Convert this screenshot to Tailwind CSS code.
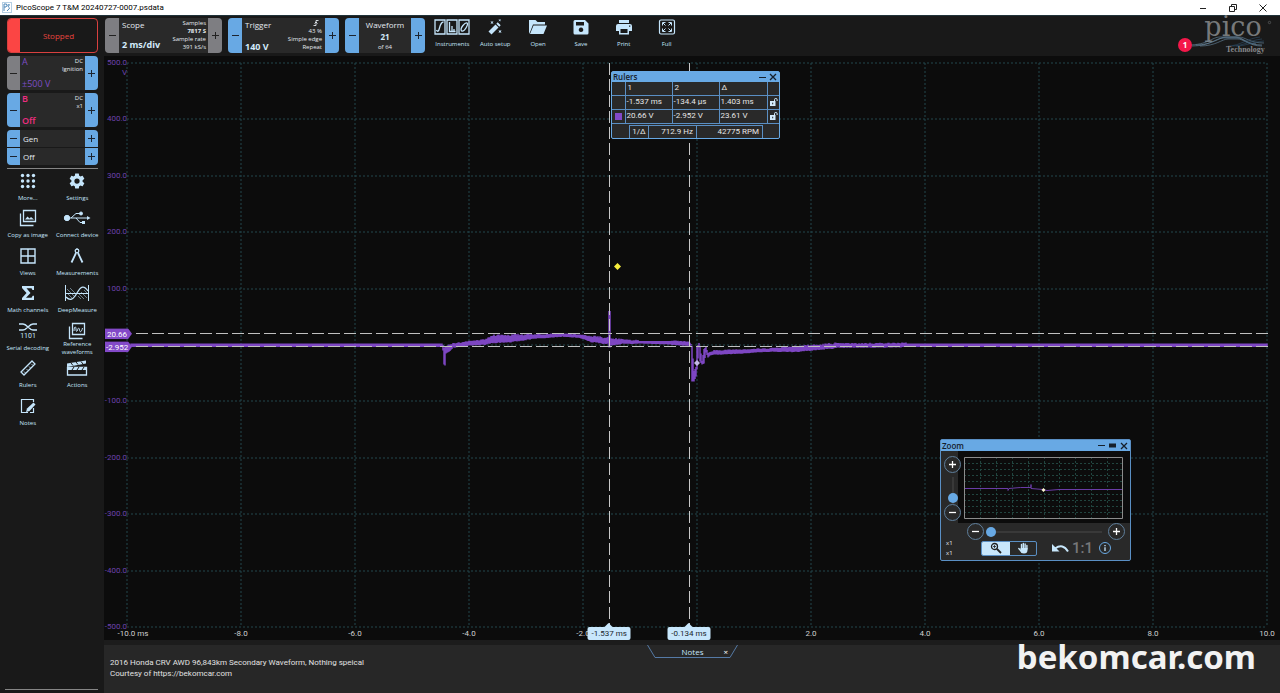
<!DOCTYPE html>
<html lang="en">
<head>
  <meta charset="UTF-8" />
  <meta name="viewport" content="width=device-width, initial-scale=1.0"/>
  <title>PicoScope 7 T&amp;M</title>
  <script src="https://cdn.jsdelivr.net/npm/@tailwindcss/browser@4"></script>
</head>
<body class="h-screen flex flex-col overflow-hidden bg-[#191919] text-[#e4eaf0] font-['Open_Sans',sans-serif]">

  <!-- title bar -->
  <header class="h-[15px] shrink-0 flex items-center bg-white text-black pl-0.5">
    <svg class="w-[10px] h-[11px]" viewBox="0 0 10 11" fill="none" stroke="#4c86b8"><rect x=".5" y=".5" width="9" height="10" stroke="#b5cfe4"/><path d="M2 9V2h2.500q1 1.500-.5 3H2M8 3q-3-1-2 1t1.500 2T5 9"/></svg>
    <h1 class="text-[8px] leading-[14px] ml-1 grow font-[Roboto,sans-serif]">PicoScope 7 T&amp;M 20240727-0007.psdata</h1>
    <button class="w-[30px] h-full grid place-items-center" aria-label="Minimize"><svg class="w-2 h-2" viewBox="0 0 8 8" stroke="#222"><path d="M1 4.500h6"/></svg></button>
    <button class="w-[30px] h-full grid place-items-center" aria-label="Restore"><svg class="w-2 h-2" viewBox="0 0 8 8" fill="none" stroke="#222"><path d="M.5 2.500h5v5h-5zM2.500 2V.5h5v5H6"/></svg></button>
    <button class="w-[30px] h-full grid place-items-center mr-0.5" aria-label="Close"><svg class="w-2 h-2" viewBox="0 0 8 8" stroke="#222"><path d="M.5.5l7 7M7.500.5l-7 7"/></svg></button>
  </header>

  <div class="grow flex min-h-0 border-t border-[#20333a]">

    <!-- left column -->
    <aside class="w-[104px] shrink-0 flex flex-col pl-[7px] pr-[6px] pt-0.5">
      <button class="h-[35px] flex rounded border border-[#d8403f] overflow-hidden text-[#e8453f] text-[8px]">
        <span class="w-3 h-full bg-[#fb4544]"></span>
        <span class="grow self-center">Stopped</span>
      </button>

      <section class="mt-[3px] h-[34px] flex rounded overflow-hidden bg-[#292929]">
        <button class="w-[13px] bg-[#7e7e82] text-[#222] grid place-items-center" aria-label="Channel A range down"><svg class="w-[7px] h-[7px]" viewBox="0 0 7 7" stroke="currentColor"><path d="M0 3.500h7"/></svg></button>
        <div class="grow flex justify-between px-0.5">
          <div class="flex flex-col justify-between text-[#7d4dc4] text-[9px] leading-[12px]"><span>A</span><span>±500 V</span></div>
          <div class="-ml-4 pt-px text-right text-[6px] leading-[8px]">DC<br>Ignition</div>
        </div>
        <button class="w-[13px] bg-[#68a9e4] text-[#1c2430] grid place-items-center" aria-label="Channel A range up"><svg class="w-[7px] h-[7px]" viewBox="0 0 7 7" stroke="currentColor"><path d="M0 3.500h7M3.500 0v7"/></svg></button>
      </section>

      <section class="mt-[3px] h-[34px] flex rounded overflow-hidden bg-[#292929]">
        <button class="w-[13px] bg-[#68a9e4] text-[#1c2430] grid place-items-center" aria-label="Channel B range down"><svg class="w-[7px] h-[7px]" viewBox="0 0 7 7" stroke="currentColor"><path d="M0 3.500h7"/></svg></button>
        <div class="grow flex justify-between px-0.5">
          <div class="flex flex-col justify-between text-[#ee2d80] text-[9px] leading-[12px] font-semibold"><span>B</span><span>Off</span></div>
          <div class="pt-px text-right text-[6px] leading-[8px]">DC<br>x1</div>
        </div>
        <button class="w-[13px] bg-[#68a9e4] text-[#1c2430] grid place-items-center" aria-label="Channel B range up"><svg class="w-[7px] h-[7px]" viewBox="0 0 7 7" stroke="currentColor"><path d="M0 3.500h7M3.500 0v7"/></svg></button>
      </section>

      <section class="mt-[3px] h-[35px] grid grid-rows-2 gap-px rounded overflow-hidden text-[8px]">
        <div class="flex bg-[#292929]">
          <button class="w-[13px] bg-[#68a9e4] text-[#1c2430] grid place-items-center" aria-label="Generator down"><svg class="w-[7px] h-[7px]" viewBox="0 0 7 7" stroke="currentColor"><path d="M0 3.500h7"/></svg></button>
          <span class="grow self-center pl-[3px]">Gen</span>
          <button class="w-[13px] bg-[#68a9e4] text-[#1c2430] grid place-items-center" aria-label="Generator up"><svg class="w-[7px] h-[7px]" viewBox="0 0 7 7" stroke="currentColor"><path d="M0 3.500h7M3.500 0v7"/></svg></button>
        </div>
        <div class="flex bg-[#292929]">
          <button class="w-[13px] bg-[#68a9e4] text-[#1c2430] grid place-items-center" aria-label="Generator off"><svg class="w-[7px] h-[7px]" viewBox="0 0 7 7" stroke="currentColor"><path d="M0 3.500h7"/></svg></button>
          <span class="grow self-center pl-[3px]">Off</span>
          <button class="w-[13px] bg-[#68a9e4] text-[#1c2430] grid place-items-center" aria-label="Generator on"><svg class="w-[7px] h-[7px]" viewBox="0 0 7 7" stroke="currentColor"><path d="M0 3.500h7M3.500 0v7"/></svg></button>
        </div>
      </section>

      <hr class="mt-[3px] border-[#858585]">

      <nav class="-mx-1 mt-[3px] h-[262px] grid grid-cols-2 grid-rows-7 text-[6px] leading-[8px] text-[#c5e5fb] text-center whitespace-nowrap">
        <button class="flex flex-col items-center gap-1">
          <svg class="w-[18px] h-[18px]" viewBox="0 0 18 18" fill="currentColor"><g id="dots"><circle cx="3.500" cy="3.500" r="1.700"/><circle cx="9" cy="3.500" r="1.700"/><circle cx="14.500" cy="3.500" r="1.700"/></g><use href="#dots" y="5.500"/><use href="#dots" y="11"/></svg>
          More...
        </button>
        <button class="flex flex-col items-center gap-1">
          <svg class="w-[18px] h-[18px]" viewBox="0 0 24 24" fill="currentColor"><path d="M19.430 12.980c.04-.32.07-.64.07-.98s-.03-.66-.07-.98l2.110-1.650c.19-.15.24-.42.12-.64l-2-3.460c-.12-.22-.39-.3-.61-.22l-2.490 1c-.52-.4-1.080-.73-1.690-.98l-.38-2.650A.49.49 0 0 0 14 2h-4c-.25 0-.46.18-.49.42l-.38 2.650c-.61.25-1.170.59-1.690.98l-2.490-1c-.23-.09-.49 0-.61.22l-2 3.460c-.13.22-.07.49.12.64l2.110 1.650c-.04.32-.07.65-.07.98s.03.66.07.98l-2.110 1.650c-.19.15-.24.42-.12.64l2 3.460c.12.22.39.3.61.22l2.490-1c.52.4 1.080.73 1.690.98l.38 2.650c.03.24.24.42.49.42h4c.25 0 .46-.18.49-.42l.38-2.650c.61-.25 1.170-.59 1.690-.98l2.490 1c.23.09.49 0 .61-.22l2-3.460c.12-.22.07-.49-.12-.64l-2.110-1.650zM12 15.500a3.500 3.500 0 1 1 0-7 3.500 3.500 0 0 1 0 7z"/></svg>
          Settings
        </button>
        <button class="flex flex-col items-center gap-1">
          <svg class="w-[18px] h-[18px]" viewBox="0 0 18 18" fill="none" stroke="currentColor" stroke-width="1.300"><path d="M4.500 1.500h12v11h-12zM1.500 4.500v12h13"/><path d="M6 10.500l2.500-3 2 2 1.500-1.500 3 2.500z" fill="currentColor" stroke="none"/></svg>
          Copy as image
        </button>
        <button class="flex flex-col items-center gap-1">
          <svg class="w-[28px] h-[18px]" viewBox="0 0 28 18" fill="none" stroke="currentColor"><circle cx="4" cy="9" r="2.700" fill="currentColor"/><path d="M4 9h20M8 9l5-4.500h4M13 9l4 4.500h3"/><path d="M24 7l3.500 2-3.500 2z" fill="currentColor" stroke="none"/><circle cx="18" cy="4.500" r="1.500" fill="currentColor"/><path d="M19 12h3v3h-3z" fill="currentColor" stroke="none"/></svg>
          Connect device
        </button>
        <button class="flex flex-col items-center gap-1">
          <svg class="w-[18px] h-[18px]" viewBox="0 0 18 18" fill="none" stroke="currentColor" stroke-width="1.400"><path d="M2 2h14v14H2zM9 2v14M2 9h14"/></svg>
          Views
        </button>
        <button class="flex flex-col items-center gap-1">
          <svg class="w-[18px] h-[18px]" viewBox="0 0 18 18" fill="none" stroke="currentColor" stroke-width="1.800"><circle cx="9" cy="4" r="1.800" stroke-width="1.300"/><path d="M9 1v2" stroke-width="1"/><path d="M8 6L3.500 15.500M10 6l4.500 9.500"/></svg>
          Measurements
        </button>
        <button class="flex flex-col items-center gap-1">
          <svg class="w-[18px] h-[18px]" viewBox="0 0 18 18" fill="currentColor"><path d="M3 2h12v4h-1.500L12.500 4.300H7.500L11.500 9l-4.500 4.700h5.500l1.200-2H15V16H3v-2l4.500-5L3 4z"/></svg>
          Math channels
        </button>
        <button class="flex flex-col items-center gap-1">
          <svg class="w-[26px] h-[18px]" viewBox="0 0 26 18" fill="none" stroke="currentColor"><path d="M1.500 1v16M24.500 1v16M1.500 9.500h23"/><path d="M2 13C6 17 9 16 13 9S20 1 24 7" stroke-width="1.300"/><path d="M3 5l7 7M6 4l6 6M3 9l5 5M14 9l6 6M17 8l6 6M14 12l3 3M20 6l4 4" stroke-width=".5"/></svg>
          DeepMeasure
        </button>
        <button class="flex flex-col items-center gap-1">
          <svg class="w-[20px] h-[18px]" viewBox="0 0 20 18"><path d="M1 2h4c4 0 6 6 10 6h4M1 8h4c4 0 6-6 10-6h4" fill="none" stroke="currentColor" stroke-width="1.400"/><text x="10" y="16" text-anchor="middle" font-family="Roboto" font-size="7" fill="currentColor">1101</text></svg>
          Serial decoding
        </button>
        <button class="flex flex-col items-center">
          <svg class="w-[18px] h-[18px]" viewBox="0 0 18 18" fill="none" stroke="currentColor" stroke-width="1.300"><path d="M4.500 1.500h12v11h-12zM1.500 4.500v12h13"/><path d="M6 9c0-5 2-5 2-2s1 3 1.500 1 1.500-3 2 0 2 2 3-2" stroke-width="1"/></svg>
          <span>Reference<br>waveforms</span>
        </button>
        <button class="flex flex-col items-center gap-1">
          <svg class="w-[18px] h-[18px]" viewBox="0 0 18 18" fill="none" stroke="currentColor" stroke-width="1.300"><path d="M2 13L13 2l3 3L5 16z"/><path d="M5 12.500l1.500 1.500M7.500 10l1.500 1.500M10 7.500L11.500 9M12.500 5L14 6.500" stroke-width=".8"/></svg>
          Rulers
        </button>
        <button class="flex flex-col items-center gap-1">
          <svg class="w-[22px] h-[18px]" viewBox="0 0 22 18" fill="none" stroke="currentColor"><path d="M1.500 8.500h19v7.500h-19z" stroke-width="1.300"/><path d="M1 4.500L20 1.500v3L1 8zM1 8h20v3H1z" fill="currentColor" stroke="none"/><path d="M5 4l2 2.500M10 3l2 2.500M15 2.500L17 5M6 11l2-3M11 11l2-3M16 11l2-3" stroke="#191919"/></svg>
          Actions
        </button>
        <button class="flex flex-col items-center gap-1">
          <svg class="w-[18px] h-[18px]" viewBox="0 0 18 18" fill="none" stroke="currentColor" stroke-width="1.200"><path d="M14.500 5V2.500h-12v13H9M14.500 11v4.500H11"/><path d="M7 15l1-3.500 6.500-6 2 2L10.500 14z" fill="currentColor" stroke="none"/></svg>
          Notes
        </button>
      </nav>

      <hr class="mt-auto mb-[3px] -ml-0.5 border-[#858585]">
    </aside>

    <main class="grow flex flex-col min-w-0">

      <!-- toolbar -->
      <div class="h-10 shrink-0 flex pt-0.5 pl-px">
        <section class="w-[117px] h-[35px] flex rounded overflow-hidden bg-[#292929]">
          <button class="w-[14px] bg-[#7e7e82] text-[#222] grid place-items-center" aria-label="Timebase down"><svg class="w-[7px] h-[7px]" viewBox="0 0 7 7" stroke="currentColor"><path d="M0 3.500h7"/></svg></button>
          <div class="grow flex justify-between pl-[3px] pr-0.5 whitespace-nowrap">
            <div class="flex flex-col justify-between text-[8px] leading-[13px] pb-0.5"><span>Scope</span><b class="text-[9px] text-[#d3ebfb]">2 ms/div</b></div>
            <div class="-ml-4 pt-px text-right text-[6px] leading-[8px]">Samples<br><b>7817 S</b><br>Sample rate<br>391 kS/s</div>
          </div>
          <button class="w-[14px] bg-[#7e7e82] text-[#222] grid place-items-center" aria-label="Timebase up"><svg class="w-[7px] h-[7px]" viewBox="0 0 7 7" stroke="currentColor"><path d="M0 3.500h7M3.500 0v7"/></svg></button>
        </section>

        <section class="ml-[6px] w-[111px] h-[35px] flex rounded overflow-hidden bg-[#292929]">
          <button class="w-[14px] bg-[#68a9e4] text-[#1c2430] grid place-items-center" aria-label="Trigger level down"><svg class="w-[7px] h-[7px]" viewBox="0 0 7 7" stroke="currentColor"><path d="M0 3.500h7"/></svg></button>
          <div class="grow flex justify-between pl-[3px] pr-[3px] whitespace-nowrap">
            <div class="flex flex-col justify-between text-[8px] leading-[13px]"><span>Trigger</span><b class="text-[9px] text-[#d3ebfb]">140 V</b></div>
            <div class="pt-px text-right text-[6px] leading-[8px]"><svg class="w-[6px] h-[8px] ml-auto mr-[3px]" viewBox="0 0 6 8" fill="none" stroke="currentColor"><path d="M.5 6.500H3v-5h2.500M1.500 4.500L3 3l1.500 1.500" stroke-width=".9"/></svg>43 %<br>Simple edge<br>Repeat</div>
          </div>
          <button class="w-[14px] bg-[#68a9e4] text-[#1c2430] grid place-items-center" aria-label="Trigger level up"><svg class="w-[7px] h-[7px]" viewBox="0 0 7 7" stroke="currentColor"><path d="M0 3.500h7M3.500 0v7"/></svg></button>
        </section>

        <section class="ml-[6px] w-20 h-[35px] flex rounded overflow-hidden bg-[#292929]">
          <button class="w-[14px] bg-[#68a9e4] text-[#1c2430] grid place-items-center" aria-label="Previous waveform"><svg class="w-[7px] h-[7px]" viewBox="0 0 7 7" stroke="currentColor"><path d="M0 3.500h7"/></svg></button>
          <div class="grow text-center text-[8px] leading-[12px] pt-px">Waveform<br><b class="text-[#d3ebfb]">21</b><div class="text-[6px] leading-[9px]">of 64</div></div>
          <button class="w-[14px] bg-[#68a9e4] text-[#1c2430] grid place-items-center" aria-label="Next waveform"><svg class="w-[7px] h-[7px]" viewBox="0 0 7 7" stroke="currentColor"><path d="M0 3.500h7M3.500 0v7"/></svg></button>
        </section>

        <div class="ml-[6px] w-[257px] grid grid-cols-6 text-[6px] leading-[8px] text-[#c5e5fb] whitespace-nowrap">
          <button class="flex flex-col items-center gap-1">
            <svg class="w-[36px] h-[18px]" viewBox="0 0 36 18" fill="none" stroke="currentColor" stroke-width="1.300"><path d="M1 2h10v14H1zM13 2h10v14H13zM25 2h10v14H25z"/><path d="M2.500 12c1 2 2 2 3-2s2-6 4-6M15.500 4v9.500h6M18 13V8M20 13v-2"/><path d="M27.500 13c-2-3 4-9 5.500-8s-2 9-5.500 8z"/></svg>
            Instruments
          </button>
          <button class="flex flex-col items-center gap-1">
            <svg class="w-[18px] h-[18px]" viewBox="0 0 18 18" fill="currentColor"><path d="M2.500 13.500l7-7 3 3-7 7z"/><path d="M10.300 5.700l1.400-1.400 3 3-1.400 1.400zM4.500 3l1.500.8L7.500 3l-.8 1.500L7.500 6 6 5.200 4.500 6l.8-1.500zM12.500 1l1.300.7L15 1l-.7 1.300.7 1.200-1.200-.7-1.300.7.7-1.200zM12.500 12l1.500.7 1.500-.7-.7 1.500.7 1.500-1.500-.7-1.500.7.7-1.500z"/></svg>
            Auto setup
          </button>
          <button class="flex flex-col items-center gap-1">
            <svg class="w-[20px] h-[18px]" viewBox="0 0 20 18" fill="currentColor"><path d="M1 2h6.500l2 2H17v2.500H5L2.500 13 1 16zM5.500 7.500H19L15.500 16H2z"/></svg>
            Open
          </button>
          <button class="flex flex-col items-center gap-1">
            <svg class="w-[18px] h-[18px]" viewBox="0 0 18 18" fill="currentColor" fill-rule="evenodd"><path d="M3 2h10l3.500 3.500V15q0 1.500-1.500 1.500H3Q1.500 16.500 1.500 15V3.500Q1.500 2 3 2zM4 4v3.500h8V4zM9 9.500a2.300 2.300 0 1 0 .01 0z"/></svg>
            Save
          </button>
          <button class="flex flex-col items-center gap-1">
            <svg class="w-[18px] h-[18px]" viewBox="0 0 18 18" fill="currentColor" fill-rule="evenodd"><path d="M4 2h10v3H4zM3 6h12q2 0 2 2v5h-3v3.500H4V13H1V8q0-2 2-2zM5.500 11v4h7v-4zM14 7.500v1.300h1.300V7.500z"/></svg>
            Print
          </button>
          <button class="flex flex-col items-center gap-1">
            <svg class="w-[18px] h-[18px]" viewBox="0 0 18 18" fill="none" stroke="currentColor"><rect x="1.500" y="2" width="15" height="14" rx="1.500" stroke-width="1.200"/><path d="M4.500 7.500v-3h3M10.500 4.500h3v3M13.500 10.500v3h-3M7.500 13.500h-3v-3M5 5l2.500 2.500M13 5l-2.500 2.500M13 13l-2.500-2.500M5 13l2.500-2.500"/></svg>
            Full
          </button>
        </div>

        <!-- brand -->
        <div class="ml-auto mr-2 flex items-start">
          <span class="relative z-10 mt-5 -mr-1 size-[14px] rounded-full bg-[#f4184a] text-white text-[8px] leading-[14px] text-center font-bold">1</span>
          <svg class="w-[84px] h-[38px] overflow-visible" viewBox="0 0 84 38" role="img" aria-label="pico Technology">
            <text x="45" y="18" text-anchor="middle" font-family="DejaVu Serif" font-size="27" fill="#77797b">pico</text>
            <circle cx="81.500" cy="4.500" r="1.200" fill="none" stroke="#77797b" stroke-width=".5"/>
            <g fill="none" stroke="#6d8ea8" stroke-width=".6"><path d="M0 27C20 27 24 19 32 19h16C54 19 60 27 74 27M4 28C22 28 28 20 35 20h14C56 20 60 28 74 28M8 27C24 27 32 19 38 19h13C57 19 62 25 76 25M12 28C28 28 34 21 40 21h10C55 21 58 26 68 26"/><path d="M40 28C52 28 60 20 72 19M44 28C56 28 62 22 74 21M48 28C58 28 64 24 76 23" stroke="#2d4f6b"/></g>
            <text x="38" y="34" font-family="Liberation Serif" font-size="8" font-weight="bold" fill="#85878a">Technology</text>
          </svg>
        </div>
      </div>

      <!-- scope view -->
      <section class="grow relative min-h-0 bg-[#0c0c0c] grid grid-cols-[23px_1fr_13px] grid-rows-[7px_1fr_13px] font-[Roboto,sans-serif] text-[8px] leading-[10px]">
        <div class="col-start-1 row-start-2 flex flex-col justify-between text-right text-[#6d42ac]">
          <div class="h-0"><div class="-mt-[5px]">500.0<br>V</div></div>
          <div class="h-0"><div class="-mt-[5px]">400.0</div></div>
          <div class="h-0"><div class="-mt-[5px]">300.0</div></div>
          <div class="h-0"><div class="-mt-[5px]">200.0</div></div>
          <div class="h-0"><div class="-mt-[5px]">100.0</div></div>
          <div class="h-0"></div>
          <div class="h-0"><div class="-mt-[5px]">-100.0</div></div>
          <div class="h-0"><div class="-mt-[5px]">-200.0</div></div>
          <div class="h-0"><div class="-mt-[5px]">-300.0</div></div>
          <div class="h-0"><div class="-mt-[5px]">-400.0</div></div>
          <div class="h-0"><div class="-mt-[5px]">-500.0</div></div>
        </div>

        <div class="col-start-2 row-start-2 relative min-h-0">
          <svg class="absolute inset-0 w-full h-full overflow-visible" viewBox="0 0 1140 564" preserveAspectRatio="none" fill="none">
            <path id="grid" stroke="#22464c" stroke-dasharray="2 2" vector-effect="non-scaling-stroke"/>
            <path id="wave" stroke="#7d46c2" stroke-width="1.500" vector-effect="non-scaling-stroke"/>
            <path d="M9 270.500h1132M9 283.500h1132" stroke="#c0c0c0" stroke-dasharray="12 4" vector-effect="non-scaling-stroke"/>
            <path d="M482.500 0v564M562.500 0v564" stroke="#c8c8c8" stroke-dasharray="12 4" vector-effect="non-scaling-stroke"/>
            <path d="M490.500 200l3.500 3.500-3.500 3.500-3.500-3.500z" fill="#f7ee3c"/>
            <path d="M570 297l3 3-3 3-3-3z" fill="#c3b8e6"/>
          </svg>

          <!-- ruler handles -->
          <span class="absolute top-[48%] -left-[22px] -translate-y-1/2 w-[27px] h-[11px] pl-0.5 leading-[11px] bg-[#8349c8] text-white [clip-path:polygon(0_0,85%_0,100%_50%,85%_100%,0_100%)]">20.66</span>
          <span class="absolute top-[50.300%] -left-[22px] -translate-y-1/2 w-[27px] h-[11px] pl-px leading-[11px] bg-[#8349c8] text-white [clip-path:polygon(0_0,85%_0,100%_50%,85%_100%,0_100%)]">-2.952</span>
          <span class="absolute z-10 top-full left-[42.300%] -translate-x-1/2 w-[43px] h-[13px] rounded-xs bg-[#c8e7fc] text-[#20262c] leading-[13px] text-center before:absolute before:-top-1 before:left-[17px] before:border-x-4 before:border-b-4 before:border-x-transparent before:border-b-[#c8e7fc]">-1.537 ms</span>
          <span class="absolute z-10 top-full left-[49.300%] -translate-x-1/2 w-[43px] h-[13px] rounded-xs bg-[#c8e7fc] text-[#20262c] leading-[13px] text-center before:absolute before:-top-1 before:left-[17px] before:border-x-4 before:border-b-4 before:border-x-transparent before:border-b-[#c8e7fc]">-0.134 ms</span>
        </div>

        <div class="col-start-2 row-start-3 flex justify-between pt-0.5 text-[#d0d0d0] whitespace-nowrap">
          <span class="w-0 flex justify-center"><span class="pl-3">-10.0 ms</span></span>
          <span class="w-0 flex justify-center">-8.0</span>
          <span class="w-0 flex justify-center">-6.0</span>
          <span class="w-0 flex justify-center">-4.0</span>
          <span class="w-0 flex justify-center">-2.0</span>
          <span class="w-0"></span>
          <span class="w-0 flex justify-center">2.0</span>
          <span class="w-0 flex justify-center">4.0</span>
          <span class="w-0 flex justify-center">6.0</span>
          <span class="w-0 flex justify-center">8.0</span>
          <span class="w-0 flex justify-center">10.0</span>
        </div>

        <!-- rulers window -->
        <div class="absolute left-[507px] top-[15px] w-[169px] rounded-xs border border-[#68a9e4] bg-[#292929] text-[#e6e6e6] text-[8px]">
          <div class="h-[10px] flex items-center bg-[#68a9e4] text-[#16202b] pl-px">
            <h2 class="grow leading-[10px] font-semibold font-['Open_Sans',sans-serif]">Rulers</h2>
            <button class="w-[10px]" aria-label="Minimize rulers"><svg class="w-[7px] h-[7px]" viewBox="0 0 7 7" stroke="currentColor"><path d="M0 3.500h7"/></svg></button>
            <button class="w-[10px]" aria-label="Close rulers"><svg class="w-[8px] h-[8px]" viewBox="0 0 8 8" stroke="currentColor" stroke-width="1.300"><path d="M1 1l6 6M7 1L1 7"/></svg></button>
          </div>
          <table class="w-full table-fixed border-collapse text-left leading-[12px]">
            <colgroup><col class="w-[13px]"><col class="w-[47px]"><col class="w-[47px]"><col class="w-[48px]"><col class="w-[12px]"></colgroup>
            <tr class="h-[13px] border-b border-[#5a8fc4]"><td></td><th class="border-l border-[#5a8fc4] p-0 pl-0.5 font-normal">1</th><th class="border-l border-[#5a8fc4] p-0 pl-0.5 font-normal">2</th><th class="border-l border-[#5a8fc4] p-0 pl-0.5 font-normal">Δ</th><td class="border-l border-[#5a8fc4]"></td></tr>
            <tr class="h-[14px] border-b border-[#5a8fc4]"><td></td><td class="border-l border-[#5a8fc4] pl-px">-1.537 ms</td><td class="border-l border-[#5a8fc4] pl-px">-134.4 µs</td><td class="border-l border-[#5a8fc4] pl-px">1.403 ms</td><td class="border-l border-[#5a8fc4] pl-0.5"><svg class="w-2 h-2" viewBox="0 0 8 8" fill="none" stroke="#d5ecfc"><path d="M0 3h5.500v5H0z" fill="#d5ecfc" stroke="none"/><path d="M4.500 3V1.500q0-1 1.300-1t1.300 1V3"/><path d="M2.700 4.700v1.600" stroke="#292929"/></svg></td></tr>
            <tr class="h-[14px] border-b border-[#5a8fc4]"><td class="pl-[3px]"><div class="size-[7px] bg-[#8349c8]"></div></td><td class="border-l border-[#5a8fc4] pl-px">20.66 V</td><td class="border-l border-[#5a8fc4] pl-px">-2.952 V</td><td class="border-l border-[#5a8fc4] pl-px">23.61 V</td><td class="border-l border-[#5a8fc4] pl-0.5"><svg class="w-2 h-2" viewBox="0 0 8 8" fill="none" stroke="#d5ecfc"><path d="M0 3h5.500v5H0z" fill="#d5ecfc" stroke="none"/><path d="M4.500 3V1.500q0-1 1.300-1t1.300 1V3"/><path d="M2.700 4.700v1.600" stroke="#292929"/></svg></td></tr>
          </table>
          <table class="mt-px ml-[17px] w-[134px] table-fixed border-collapse border-x border-t border-[#5a8fc4] leading-[12px]">
            <tr class="h-[13px]"><td class="w-[19px] text-center">1/Δ</td><td class="w-[48px] border-l border-[#5a8fc4] pr-[3px] text-right">712.9 Hz</td><td class="border-l border-[#5a8fc4] pr-[3px] text-right">42775 RPM</td></tr>
          </table>
        </div>

        <!-- zoom window -->
        <div class="absolute right-[149px] bottom-[79px] w-[191px] rounded-xs border border-[#5a8fc4] bg-[#292929] font-['Open_Sans',sans-serif]">
          <div class="h-[11px] flex items-center bg-[#68a9e4] text-[#16202b] pl-px">
            <h2 class="grow leading-[10px] font-semibold">Zoom</h2>
            <button class="w-[11px]" aria-label="Minimize zoom"><svg class="w-[7px] h-[7px]" viewBox="0 0 7 7" stroke="currentColor"><path d="M0 3.500h7"/></svg></button>
            <button class="w-[11px]" aria-label="Dock zoom"><svg class="w-[7px] h-[7px]" viewBox="0 0 7 7" fill="currentColor"><path d="M0 1.500h7v4H0z"/></svg></button>
            <button class="w-[10px]" aria-label="Close zoom"><svg class="w-[8px] h-[8px]" viewBox="0 0 8 8" stroke="currentColor" stroke-width="1.300"><path d="M1 1l6 6M7 1L1 7"/></svg></button>
          </div>
          <div class="flex h-[72px]">
            <div class="w-[17px] pl-[3px] pt-[5px] flex flex-col items-start">
              <button class="relative z-10 size-[17px] shrink-0 rounded-full border border-[#5f7f9c] bg-[#292929] grid place-items-center" aria-label="Zoom in vertically"><svg class="w-[7px] h-[7px]" viewBox="0 0 7 7" stroke="#fff" stroke-width="1.300"><path d="M0 3.500h7M3.500 0v7"/></svg></button>
              <input type="range" value="5" aria-label="Vertical zoom" class="ml-1 mt-1 w-[10px] h-[27px] appearance-none [writing-mode:vertical-lr] [direction:rtl] [background:linear-gradient(#393939,#393939)_center/2px_100%_no-repeat] [&::-webkit-slider-thumb]:appearance-none [&::-webkit-slider-thumb]:size-[10px] [&::-webkit-slider-thumb]:rounded-full [&::-webkit-slider-thumb]:bg-[#68a9e4]">
              <button class="relative z-10 size-[17px] shrink-0 rounded-full border border-[#5f7f9c] bg-[#292929] grid place-items-center" aria-label="Zoom out vertically"><svg class="w-[7px] h-[7px]" viewBox="0 0 7 7" stroke="#fff" stroke-width="1.300"><path d="M0 3.500h7"/></svg></button>
            </div>
            <div class="grow bg-[#0c0c0c] pl-[6px] pr-[7px] pt-[6px] pb-1">
              <svg class="w-full h-full" viewBox="0 0 159 62" preserveAspectRatio="none" fill="none">
                <path d="M16.500 0v62M32.500 0v62M48.500 0v62M64.500 0v62M80.500 0v62M95.500 0v62M111.500 0v62M127.500 0v62M143.500 0v62M0 6.500h159M0 12.500h159M0 18.500h159M0 24.500h159M0 37.500h159M0 43.500h159M0 49.500h159M0 55.500h159" stroke="#21453f" stroke-dasharray="2 2"/>
                <path d="M0 31.500h44v2l1-2q12-1.500 22-1v-3 4l12 1 4 1 12-1h64" stroke="#6a3ca6"/>
                <path d="M.5.5h158v61H.5z" stroke="#8c8c8c"/>
                <path d="M79.500 31l2 2-2 2-2-2z" fill="#fdf8d0"/>
              </svg>
            </div>
          </div>
          <div class="flex items-center h-[17px] pl-[26px] pr-[5px]">
            <button class="size-[17px] shrink-0 rounded-full border border-[#5f7f9c] bg-[#292929] grid place-items-center" aria-label="Zoom out horizontally"><svg class="w-[7px] h-[7px]" viewBox="0 0 7 7" stroke="#fff" stroke-width="1.300"><path d="M0 3.500h7"/></svg></button>
            <input type="range" value="0" aria-label="Horizontal zoom" class="mx-0.5 min-w-0 grow h-[10px] appearance-none [background:linear-gradient(#393939,#393939)_center/100%_2px_no-repeat] [&::-webkit-slider-thumb]:appearance-none [&::-webkit-slider-thumb]:size-[10px] [&::-webkit-slider-thumb]:rounded-full [&::-webkit-slider-thumb]:bg-[#68a9e4]">
            <button class="ml-1 size-[17px] shrink-0 rounded-full border border-[#5f7f9c] bg-[#292929] grid place-items-center" aria-label="Zoom in horizontally"><svg class="w-[7px] h-[7px]" viewBox="0 0 7 7" stroke="#fff" stroke-width="1.300"><path d="M0 3.500h7M3.500 0v7"/></svg></button>
          </div>
          <div class="flex items-center h-5 pl-[5px] pb-1">
            <div class="w-[35px] text-[6px] leading-[10px]">x1<br>x1</div>
            <div class="flex w-[56px] h-[15px] rounded-xs border border-[#5a8fc4] overflow-hidden">
              <button class="w-7 bg-[#c8e7fc] grid place-items-center" aria-label="Zoom tool"><svg class="w-3 h-3" viewBox="0 0 12 12" fill="none" stroke="#222" stroke-width="1.300"><circle cx="4.500" cy="4.500" r="3"/><path d="M7 7l4 4" stroke-width="1.800"/><path d="M3 4.500h3M4.500 3v3" stroke-width=".8"/></svg></button>
              <button class="grow grid place-items-center" aria-label="Pan tool"><svg class="w-3 h-3" viewBox="0 0 12 12" fill="none" stroke="#c8e7fc" stroke-width="1.400" stroke-linecap="round"><path d="M4.500 6.500V2.500M6.300 6V1.500M8.100 6.500V2M9.900 7V3.500M1.800 6.500L4 9"/><path d="M3.500 6h7v2q0 3.500-3.500 3.500T3.500 9z" fill="#c8e7fc" stroke="none"/></svg></button>
            </div>
            <button class="ml-[15px]" aria-label="Undo zoom"><svg class="w-[17px] h-[10px]" viewBox="0 0 17 10" fill="none" stroke="#c8e7fc" stroke-width="2"><path d="M3 5.500Q11 0 16 8.500"/><path d="M0 1v7.500h7.500z" fill="#c8e7fc" stroke="none"/></svg></button>
            <button class="ml-[3px] w-[21px] text-[15px] leading-4 font-medium font-[Roboto,sans-serif] text-[#77777a]">1:1</button>
            <button class="ml-[6px] size-3 rounded-full border border-[#68a9e4] grid place-items-center" aria-label="Zoom help"><svg class="w-2 h-2" viewBox="0 0 8 8" stroke="#c8e7fc" stroke-width="1.300"><path d="M4 1v1.300M4 3.300V7"/></svg></button>
          </div>
        </div>
      </section>

      <!-- notes -->
      <section class="relative h-[53px] shrink-0 border-t-[5px] border-[#1c1c1c] bg-[#272727] text-[8px] leading-[11px] pl-[6px] pt-3">
        <div class="absolute top-0 left-1/2 -ml-[45px] w-[91px] h-3 flex items-center justify-center text-[#c5e5fb]">
          <svg class="absolute inset-0" viewBox="0 0 91 13" fill="none" stroke="#557aa6"><path d="M.5 0L8 12.500h75L90.500 0"/></svg>
          Notes
          <button class="absolute right-[10px] text-[8px] leading-[11px] text-white" aria-label="Close notes">×</button>
        </div>
        <p class="text-[#e2e2e2] font-[Roboto,sans-serif]">2016 Honda CRV AWD 96,843km Secondary Waveform, Nothing speical<br>Courtesy of https://bekomcar.com</p>
        <div class="absolute right-6 -top-1 text-[33px] leading-8 font-bold text-[#f2f2f2] font-['Noto_Sans',sans-serif]">bekomcar.com</div>
      </section>
    </main>
  </div>

  <script>
    // graticule: ten divisions each way
    let grid = "";
    for (let i = 0; i <= 10; i++) {
      grid += `M${i * 114} 0V564M0 ${Math.round(i * 56.4)}H1140`;
    }
    document.getElementById("grid").setAttribute("d", grid);

    // channel A envelope: x, top, bottom, noise
    const envelope = [
      [4, 280.5, 283.5, 0], [315, 280.5, 283.5, 0], [316, 282, 287, 0], [317, 285, 301, 0], [318, 284, 302, 0], [319, 283, 290, 0],
      [322, 282, 288, 1], [326, 281, 284, 1], [340, 279, 282, 1], [358, 277, 281, 1], [366, 273, 279, 2], [385, 273, 278, 2],
      [405, 272, 275, 1], [435, 271, 273, 1], [452, 272, 274, 1], [464, 274, 278, 2], [481, 276, 280, 2], [482, 248, 284, 0],
      [483, 248, 284, 0], [484, 276, 281, 2], [495, 277, 280, 1], [512, 278, 280, 0], [545, 278, 281, 1], [562, 279, 282, 1],
      [564, 281, 282, 0], [565, 283, 318, 0], [567, 308, 318, 0], [569, 304, 313, 0], [570, 284, 306, 0], [572, 280, 284, 0],
      [573, 283, 298, 0], [575, 298, 301, 0], [577, 286, 300, 0], [579, 284, 289, 0], [581, 290, 294, 0], [583, 289, 292, 0],
      [587, 288, 291, 1], [610, 287, 290, 1], [640, 286, 288, 1], [665, 284, 288, 2], [690, 283, 286, 2], [710, 281, 284, 1],
      [780, 280.5, 283.5, 0], [1140, 280.5, 283.5, 0],
    ];
    let wave = "", k = 0, seed = 7;
    for (let x = 4; x <= 1140; x++) {
      while (k < envelope.length - 2 && x >= envelope[k + 1][0]) k++;
      const [x0, t0, b0, n] = envelope[k];
      const [x1, t1, b1] = envelope[k + 1];
      const f = (x - x0) / (x1 - x0);
      seed = (seed * 1103515245 + 12345) % 2147483648;
      const r = seed / 2147483648;
      wave += `M${x} ${t0 + (t1 - t0) * f - n * r}V${b0 + (b1 - b0) * f + n * (1 - r) * 0.5 + 0.5}`;
    }
    document.getElementById("wave").setAttribute("d", wave);
  </script>
</body>
</html>
